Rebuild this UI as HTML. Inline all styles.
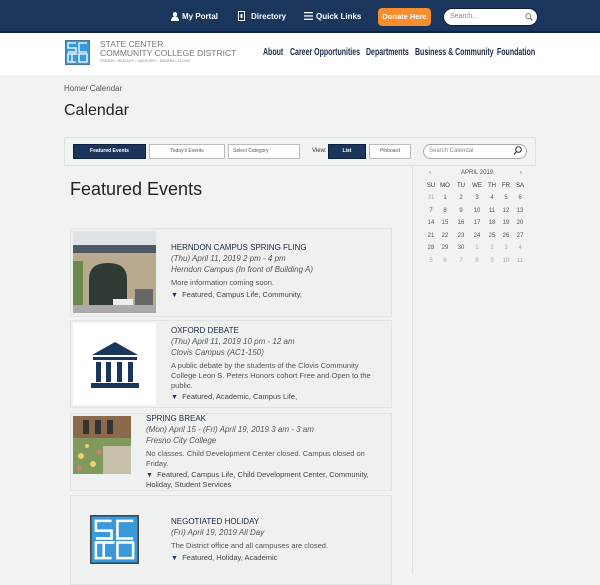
<!DOCTYPE html>
<html><head><meta charset="utf-8"><style>
*{margin:0;padding:0;box-sizing:border-box}
body{width:600px;height:574px;overflow:hidden;background:#f1f2f2;font-family:"Liberation Sans",sans-serif;position:relative;color:#333}
.a{position:absolute;white-space:nowrap}
.top{left:0;top:0;width:600px;height:33px;background:#1b365d;border-bottom:2px solid #0f2447}
.tl{color:#fff;font-size:8px;font-weight:bold;top:12px}
.nav{left:0;top:33px;width:600px;height:42px;background:#fff}
.nl{top:47px;font-size:10px;font-weight:bold;color:#1b2a44;transform:scaleX(0.7);transform-origin:left top}
.btn{height:15px;border:1px solid #bbb;background:#fff;font-size:5px;color:#555;line-height:13px;text-align:center}
.btn.d{background:#1b365d;color:#fff;border-color:#0d1f3d;font-weight:bold}
.card{background:#eff0f0;border:1px solid #e2e3e3}
.t{font-size:8px;color:#1b2a44}
.i{font-size:8px;font-style:italic;color:#555}
.p{font-size:7.5px;color:#555;line-height:10px}
.cal{font-size:6px;color:#555;text-align:center;width:14px}
</style></head><body>
<div class="a top"></div>
<svg class="a" style="left:171px;top:12px" width="8" height="9" viewBox="0 0 8 9"><circle cx="4" cy="2.3" r="2.2" fill="#fff"/><path d="M0 9 Q0 4.5 4 4.5 Q8 4.5 8 9Z" fill="#fff"/></svg>
<div class="a tl" style="left:182px">My Portal</div>
<svg class="a" style="left:238px;top:11px" width="7" height="10"><rect x="0.5" y="0.5" width="6" height="9" fill="none" stroke="#fff"/><rect x="2.5" y="3" width="2" height="4" fill="#fff"/></svg>
<div class="a tl" style="left:251px">Directory</div>
<svg class="a" style="left:304px;top:12px" width="9" height="8"><rect y="0" width="9" height="1.3" fill="#fff"/><rect y="3.3" width="9" height="1.3" fill="#fff"/><rect y="6.6" width="9" height="1.3" fill="#fff"/></svg>
<div class="a tl" style="left:316px">Quick Links</div>
<div class="a" style="left:378px;top:8px;width:53px;height:18px;background:#f68d2e;border-radius:4px;color:#fff;font-size:7.5px;font-weight:bold;text-align:center;line-height:18px">Donate Here</div>
<div class="a" style="left:443px;top:8px;width:95px;height:18px;background:#fff;border-radius:9px;border:1px solid #0d1f3d;font-size:7px;color:#888;line-height:16px;padding-left:6px">Search...</div>
<svg class="a" style="left:525px;top:13px" width="8" height="8"><circle cx="3.3" cy="3.3" r="2.5" fill="none" stroke="#777"/><path d="M5 5 L7.5 7.5" stroke="#777" stroke-width="1.2"/></svg>
<div class="a nav"></div>
<svg class="a" style="left:65px;top:40px" width="25" height="25" viewBox="0 0 25 25"><rect width="25" height="25" fill="#3a9ad9" stroke="#555" stroke-width="1"/><g stroke="#fff" stroke-width="1.3" fill="none"><path d="M11 3H3V8H11V12H3"/><path d="M22 3H14V12H22"/><path d="M11 14H3V22H11"/><path d="M12.5 14H7V22"/><path d="M22 14H14V22H22Z"/></g></svg>
<div class="a" style="left:100px;top:40px;font-size:8.5px;color:#777;line-height:9px">STATE CENTER<br>COMMUNITY COLLEGE DISTRICT</div>
<div class="a" style="left:100px;top:59px;font-size:3.5px;color:#888">FRESNO • REEDLEY • OAKHURST • MADERA • CLOVIS</div>
<div class="a nl" style="left:263px">About</div>
<div class="a nl" style="left:290px">Career Opportunities</div>
<div class="a nl" style="left:366px">Departments</div>
<div class="a nl" style="left:415px">Business &amp; Community</div>
<div class="a nl" style="left:497px">Foundation</div>
<div class="a" style="left:64px;top:84px;font-size:8px;color:#555">Home/ Calendar</div>
<div class="a" style="left:64px;top:102px;font-size:16px;color:#222">Calendar</div>
<div class="a" style="left:64px;top:137px;width:472px;height:29px;border:1px solid #e0e1e1"></div>
<div class="a btn d" style="left:73px;top:144px;width:73px">Featured Events</div>
<div class="a btn" style="left:149px;top:144px;width:76px">Today's Events</div>
<div class="a btn" style="left:228px;top:144px;width:72px;text-align:left;padding-left:4px">Select Category</div>
<div class="a" style="left:312px;top:148px;font-size:6px;color:#333">View:</div>
<div class="a btn d" style="left:328px;top:144px;width:38px">List</div>
<div class="a btn" style="left:369px;top:144px;width:42px">Pinboard</div>
<div class="a" style="left:423px;top:144px;width:104px;height:15px;border:1px solid #aaa;border-radius:8px;background:#fff;font-size:6px;color:#888;line-height:13px;padding-left:5px">Search Calendar</div>
<svg class="a" style="left:513px;top:146px" width="9" height="10"><circle cx="5.5" cy="3.5" r="2.8" fill="none" stroke="#333"/><path d="M3.5 5.5L1 8.5" stroke="#333" stroke-width="1.2"/></svg>
<div class="a" style="left:412px;top:166px;width:1px;height:408px;background:#e0e1e1"></div>
<div class="a" style="left:70px;top:179px;font-size:18px;color:#222">Featured Events</div>
<div class="a" style="left:424px;top:170px;width:112px;font-size:6px;color:#555"><span style="position:absolute;left:5px">‹</span><span style="position:absolute;left:37px">APRIL 2019</span><span style="position:absolute;left:96px">›</span></div>
<div id="cal"></div>
<div class="a card" style="left:70px;top:228px;width:322px;height:89px"></div>
<svg class="a" style="left:73px;top:231px" width="83" height="82" viewBox="0 0 83 82"><rect width="83" height="82" fill="#dde3e6"/><rect x="0" y="18" width="83" height="58" fill="#b9a98f"/><rect x="0" y="14" width="83" height="8" fill="#4f5a66"/><path d="M16 76V48Q16 32 35 32Q54 32 54 48V76Z" fill="#2d3b33"/><rect x="0" y="30" width="10" height="46" fill="#6b8a4a"/><rect x="0" y="74" width="83" height="8" fill="#aaa"/><rect x="62" y="58" width="18" height="16" fill="#666"/><rect x="40" y="68" width="20" height="6" fill="#eee"/></svg>
<div class="a t" style="left:171px;top:243px">HERNDON CAMPUS SPRING FLING</div>
<div class="a i" style="left:171px;top:254px">(Thu) April 11, 2019 2 pm - 4 pm</div>
<div class="a i" style="left:171px;top:265px">Herndon Campus (In front of Building A)</div>
<div class="a p" style="left:171px;top:278px">More information coming soon.</div>
<div class="a p" style="left:171px;top:290px;color:#444"><span style="color:#1b365d;font-size:7px">▼</span>&nbsp; Featured, Campus Life, Community,</div>
<div class="a card" style="left:70px;top:320px;width:322px;height:88px"></div>
<div class="a" style="left:73px;top:323px;width:83px;height:82px;background:#fff"></div>
<svg class="a" style="left:90px;top:339px" width="50" height="50" viewBox="0 0 50 50"><path d="M25 3L2 16H48Z" fill="#1b365d"/><rect x="3" y="18" width="44" height="3" fill="#1b365d"/><g fill="#1b365d"><rect x="6" y="23" width="5" height="20"/><rect x="16" y="23" width="5" height="20"/><rect x="27" y="23" width="5" height="20"/><rect x="38" y="23" width="5" height="20"/></g><rect x="1" y="44" width="48" height="5" fill="#1b365d"/></svg>
<div class="a t" style="left:171px;top:326px">OXFORD DEBATE</div>
<div class="a i" style="left:171px;top:337px">(Thu) April 11, 2019 10 pm - 12 am</div>
<div class="a i" style="left:171px;top:348px">Clovis Campus (AC1-150)</div>
<div class="a p" style="left:171px;top:361px;white-space:normal;width:210px">A public debate by the students of the Clovis Community College Leon S. Peters Honors cohort Free and Open to the public.</div>
<div class="a p" style="left:171px;top:392px;color:#444"><span style="color:#1b365d;font-size:7px">▼</span>&nbsp; Featured, Academic, Campus Life,</div>
<div class="a card" style="left:70px;top:413px;width:322px;height:78px"></div>
<svg class="a" style="left:73px;top:416px" width="58" height="58" viewBox="0 0 58 58"><rect width="58" height="58" fill="#8a6a4a"/><g fill="#333"><rect x="10" y="4" width="6" height="14"/><rect x="22" y="4" width="6" height="14"/><rect x="34" y="4" width="6" height="14"/></g><rect y="22" width="58" height="36" fill="#7f9a5a"/><rect x="30" y="30" width="28" height="28" fill="#c7c0a8"/><g fill="#e9d36a"><circle cx="8" cy="40" r="3"/><circle cx="20" cy="48" r="3"/><circle cx="14" cy="30" r="2"/></g><g fill="#d87a8a"><circle cx="26" cy="36" r="2.5"/><circle cx="6" cy="52" r="2.5"/></g></svg>
<div class="a t" style="left:146px;top:414px">SPRING BREAK</div>
<div class="a i" style="left:146px;top:425px">(Mon) April 15 - (Fri) April 19, 2019 3 am - 3 am</div>
<div class="a i" style="left:146px;top:436px">Fresno City College</div>
<div class="a p" style="left:146px;top:449px;white-space:normal;width:235px">No classes. Child Development Center closed. Campus closed on Friday.</div>
<div class="a p" style="left:146px;top:471px;white-space:normal;width:240px;line-height:8.5px;color:#444"><span style="color:#1b365d;font-size:7px">▼</span>&nbsp; Featured, Campus Life, Child Development Center, Community, Holiday, Student Services</div>
<div class="a card" style="left:70px;top:495px;width:322px;height:90px"></div>
<svg class="a" style="left:90px;top:515px" width="49" height="49" viewBox="0 0 25 25"><rect x="0.4" y="0.4" width="24.2" height="24.2" fill="#3a9ad9" stroke="#333" stroke-width="0.7"/><g stroke="#fff" stroke-width="1.3" fill="none"><path d="M11 3H3V8H11V12H3"/><path d="M22 3H14V12H22"/><path d="M11 14H3V22H11"/><path d="M12.5 14H7V22"/><path d="M22 14H14V22H22Z"/></g></svg>
<div class="a t" style="left:171px;top:517px">NEGOTIATED HOLIDAY</div>
<div class="a i" style="left:171px;top:528px">(Fri) April 19, 2019 All Day</div>
<div class="a p" style="left:171px;top:541px">The District office and all campuses are closed.</div>
<div class="a p" style="left:171px;top:553px;color:#444"><span style="color:#1b365d;font-size:7px">▼</span>&nbsp; Featured, Holiday, Academic</div>
<script>
var xs=[431,445,461,477,492,506,520],h=["SU","MO","TU","WE","TH","FR","SA"],s="";
h.forEach(function(d,i){s+='<div class="a cal" style="left:'+(xs[i]-7)+'px;top:183px;color:#333">'+d+'</div>'});
var days=[31];for(var i=1;i<=30;i++)days.push(i);for(i=1;i<=11;i++)days.push(i);
days.forEach(function(d,k){var r=Math.floor(k/7),c=k%7;var g=(k==0||k>30);
s+='<div class="a cal" style="left:'+(xs[c]-7)+'px;top:'+(195+r*12.5)+'px;color:'+(g?'#aaa':'#555')+'">'+d+'</div>'});
document.getElementById('cal').innerHTML=s;
</script>
</body></html>
